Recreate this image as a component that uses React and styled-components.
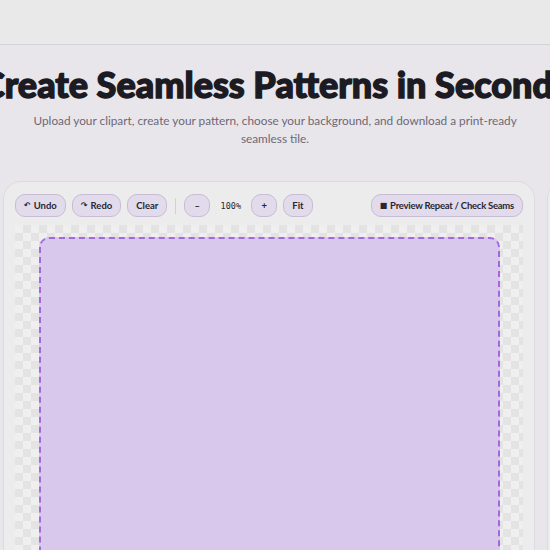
import React from 'react'
import styled, { createGlobalStyle } from 'styled-components'

const GlobalStyle = createGlobalStyle`
  html, body {
    margin: 0;
    padding: 0;
    overflow: hidden;
    background: #e8e6ea;
    font-family: Lato, "Noto Sans", sans-serif;
  }
`

const Page = styled.div`
  width: 550px;
  height: 550px;
  overflow: hidden;
`

const TopBar = styled.div`
  height: 44px;
  background: #e9e9ea;
  border-bottom: 1px solid #d4d3d6;
`

const Hero = styled.div`
  display: flex;
  flex-direction: column;
  align-items: center;
  padding-top: 17px;
`

const Title = styled.h1`
  margin: 0;
  white-space: nowrap;
  font-family: Lato, "Noto Sans", sans-serif;
  font-weight: 900;
  font-size: 36px;
  line-height: 44px;
  color: #1c1a22;
  -webkit-text-stroke: 1.4px #1c1a22;
  letter-spacing: 0;
`

const Subtitle = styled.p`
  margin: 6px 0 0;
  width: 500px;
  text-align: center;
  font-family: Lato, "Noto Sans", sans-serif;
  font-size: 11.8px;
  line-height: 17.5px;
  color: #6e6877;
`

const NoWrap = styled.span`
  white-space: nowrap;
`

const Workspace = styled.div`
  display: flex;
  gap: 12px;
  padding: 0 3px;
  margin-top: 34px;
`

const Card = styled.div`
  flex: 0 0 532px;
  box-sizing: border-box;
  padding: 12px 11px 0;
  background: #ececec;
  border: 1px solid #dcdbdd;
  border-radius: 18px;
`

const SideCard = styled(Card)`
  flex: 0 0 200px;
`

const Toolbar = styled.div`
  display: flex;
  align-items: center;
  gap: 6px;
  height: 23px;
`

const Button = styled.button`
  height: 23px;
  box-sizing: border-box;
  padding: 0 ${(p) => (p.$square ? '0' : '8px')};
  width: ${(p) => (p.$square ? '26px' : 'auto')};
  display: flex;
  align-items: center;
  justify-content: center;
  gap: 3px;
  background: #e1dbec;
  border: 1.5px solid #c7bdd4;
  border-radius: 10px;
  font-family: Lato, "Noto Sans", sans-serif;
  font-weight: 700;
  font-size: 9.5px;
  letter-spacing: ${(p) => (p.$push ? '-0.25px' : '0')};
  color: #2a2630;
  cursor: pointer;
  margin-left: ${(p) => (p.$push ? 'auto' : '0')};
`

const Glyph = styled.span`
  font-family: "DejaVu Sans", sans-serif;
  font-size: ${(p) => p.$size || '8px'};
  line-height: 1;
`

const Divider = styled.div`
  width: 1px;
  height: 16px;
  background: #d2d0d4;
  margin: 0 2px;
`

const Zoom = styled.span`
  width: 29px;
  text-align: center;
  font-family: "DejaVu Sans Mono", monospace;
  font-size: 8.5px;
  color: #2a2630;
`

const Canvas = styled.div`
  margin-top: 8px;
  padding: 12px 23px 0 24px;
  height: 600px;
  background-color: #efefef;
  background-image: conic-gradient(#e3e3e3 25%, transparent 0 50%, #e3e3e3 0 75%, transparent 0);
  background-size: 16px 16px;
`

const Tile = styled.div`
  height: 460px;
  background: #d8c8eb;
  border: 2px dashed #a467e0;
  border-radius: 10px;
`

export default function App() {
  return (
    <Page>
      <GlobalStyle />
      <TopBar />
      <Hero>
        <Title>Create Seamless Patterns in Seconds</Title>
        <Subtitle>
          Upload your clipart, create your pattern, choose your background, and download a <NoWrap>print-ready</NoWrap> seamless tile.
        </Subtitle>
      </Hero>
      <Workspace>
        <Card>
          <Toolbar>
            <Button><Glyph>↶</Glyph>Undo</Button>
            <Button><Glyph>↷</Glyph>Redo</Button>
            <Button>Clear</Button>
            <Divider />
            <Button $square>–</Button>
            <Zoom>100%</Zoom>
            <Button $square>+</Button>
            <Button>Fit</Button>
            <Button $push><Glyph $size="8px">■</Glyph>Preview Repeat / Check Seams</Button>
          </Toolbar>
          <Canvas>
            <Tile />
          </Canvas>
        </Card>
        <SideCard />
      </Workspace>
    </Page>
  )
}
